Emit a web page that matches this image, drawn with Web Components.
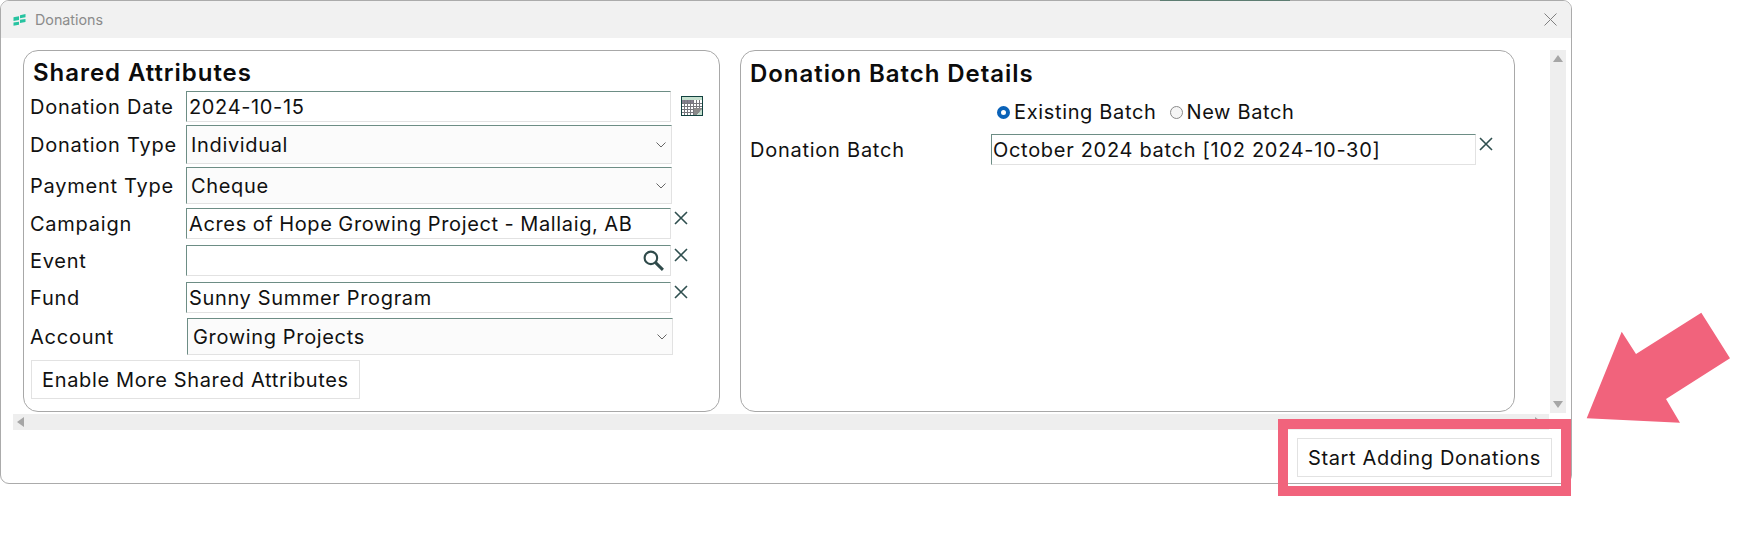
<!DOCTYPE html>
<html lang="en">
<head>
<meta charset="utf-8">
<title>Donations</title>
<style>
  html, body { margin: 0; background: #fff; }
  body { width: 1744px; height: 543px; position: relative; overflow: hidden; font-family: Inter, "Liberation Sans", sans-serif; color: #111; letter-spacing: .65px; }
  [slot="panels"] { flex: none; }
</style>
</head>
<body>
<donation-window>
  <form-panel slot="panels" heading="Shared Attributes" style="width:697px">
    <field-row label="Donation Date" top="0" height="31" icon="calendar" value="2024-10-15"></field-row>
    <field-row label="Donation Type" top="3" height="39" kind="select" value="Individual"></field-row>
    <field-row label="Payment Type" top="3" height="37" kind="select" value="Cheque"></field-row>
    <field-row label="Campaign" top="4" height="31" icon="clear" value="Acres of Hope Growing Project - Mallaig, AB" style="--ws:-.47px"></field-row>
    <field-row label="Event" top="6" height="31" icon="clear" search value=""></field-row>
    <field-row label="Fund" top="6" height="31" icon="clear" value="Sunny Summer Program"></field-row>
    <field-row label="Account" top="5" height="37" kind="select" shift="1" value="Growing Projects"></field-row>
    <plain-button style="margin:5px 0 0 7px">Enable More Shared Attributes</plain-button>
  </form-panel>
  <form-panel slot="panels" heading="Donation Batch Details" heading-drop="1" style="width:775px">
    <batch-choice></batch-choice>
    <field-row label="Donation Batch" top="0" height="31" label-width="241" pad="9" width="485" icon="clear" value="October 2024 batch [102 2024-10-30]" style="--ls:.7px;--inset:1px"></field-row>
  </form-panel>
  <plain-button slot="footer">Start Adding Donations</plain-button>
</donation-window>
<callout-mark></callout-mark>

<script>
const ICONS = {
  clear: `<svg width="14" height="14" viewBox="0 0 14 14"><path d="M1 1l12 12M13 1L1 13" stroke="#2f4f4f" stroke-width="1.600" fill="none"/></svg>`,
  search: `<svg width="23" height="23" viewBox="0 0 22 22"><circle cx="8.500" cy="8.500" r="6" stroke="#2f4a4a" stroke-width="2" fill="none"/><path d="M13 13l7 7" stroke="#2f4a4a" stroke-width="2.800" fill="none"/></svg>`,
  calendar: `<svg width="22" height="20" viewBox="0 0 22 20" shape-rendering="crispEdges">
    <rect x="0.5" y="0.5" width="21" height="19" fill="#fff" stroke="#12413f"/>
    <rect x="1" y="1" width="20" height="3" fill="#c5e0cf"/>
    <rect x="1" y="4" width="11" height="3" fill="#85808f"/>
    <path d="M1 7.500h20M1 10.500h20M1 13.500h20M1 16.500h20M3.500 4v15M6.500 4v15M9.500 4v15M12.500 4v15M15.500 4v15M18.500 4v15" stroke="#77777d" stroke-width="1" fill="none"/>
    <path d="M13 19V12h8v1l-5 6z" fill="#8a8a8a" shape-rendering="auto"/>
    <path d="M16 19l5-6v6z" fill="#c5e0cf" shape-rendering="auto"/>
  </svg>`
};

class PlainButton extends HTMLElement {
  connectedCallback() {
    if (this.shadowRoot) return;
    this.attachShadow({ mode: 'open' });
    this.shadowRoot.innerHTML = `
      <style>
        :host { display: block; width: fit-content; }
        button {
          display: block;
          height: 39px;
          padding: 0 10px;
          background: #fff;
          border: 1px solid #e2e2e2;
          font: 400 20px Inter, "Liberation Sans", sans-serif;
          letter-spacing: inherit;
          color: #111;
          white-space: nowrap;
        }
      </style>
      <button type="button"><slot></slot></button>
    `;
  }
}

class FieldRow extends HTMLElement {
  connectedCallback() {
    if (this.shadowRoot) return;
    const attr = (n, d) => this.hasAttribute(n) ? this.getAttribute(n) : d;
    const kind = attr('kind', 'text');
    const icon = attr('icon', '');
    const shift = Number(attr('shift', 0));
    const isSelect = kind === 'select';
    this.attachShadow({ mode: 'open' });
    this.shadowRoot.innerHTML = `
      <style>
        :host {
          display: flex;
          align-items: stretch;
          height: ${attr('height', 31)}px;
          margin-top: ${attr('top', 0)}px;
          padding-left: ${attr('pad', 6)}px;
        }
        .label {
          flex: none;
          width: ${Number(attr('label-width', 156)) + shift}px;
          display: flex;
          align-items: center;
          font-size: 20px;
          letter-spacing: .75px;
          white-space: nowrap;
        }
        .box {
          flex: none;
          box-sizing: border-box;
          width: ${Number(attr('width', isSelect ? 486 : 485))}px;
          display: flex;
          align-items: center;
          justify-content: space-between;
          border-style: solid;
          border-width: 1px;
          border-color: #6d8d85 #e2e2e2 #e2e2e2 #6d8d85;
          background: ${isSelect ? '#fbfbfb' : '#fff'};
          padding: 0 ${isSelect ? 5 : 5}px 0 ${isSelect ? 4 + shift : 2}px;
          font-size: 20px;
          letter-spacing: var(--ls, .65px);
          word-spacing: var(--ws, 0);
          white-space: nowrap;
        }
        .box span:first-child { margin-left: calc(var(--inset, 0px) * -1); }
        .chev { display: block; }
        .after { flex: none; margin-left: ${icon === 'calendar' ? 10 : 3}px; padding-top: ${icon === 'calendar' ? 5 : 3}px; line-height: 0; }
        .lens { line-height: 0; }
      </style>
      <span class="label">${attr('label', '')}</span>
      <div class="box">
        <span>${attr('value', '')}</span>
        ${isSelect ? `<svg class="chev" width="10" height="6" viewBox="0 0 10 6"><path d="M.5.500L5 5 9.500.500" stroke="#666" fill="none"/></svg>` : ''}
        ${this.hasAttribute('search') ? `<span class="lens">${ICONS.search}</span>` : ''}
      </div>
      ${icon ? `<span class="after">${ICONS[icon]}</span>` : ''}
    `;
  }
}

class BatchChoice extends HTMLElement {
  connectedCallback() {
    if (this.shadowRoot) return;
    this.attachShadow({ mode: 'open' });
    this.shadowRoot.innerHTML = `
      <style>
        :host {
          display: flex;
          align-items: center;
          box-sizing: border-box;
          height: 43px;
          padding: 0 0 1px 256px;
          font-size: 20px;
          white-space: nowrap;
        }
        i { flex: none; box-sizing: border-box; width: 13px; height: 13px; border-radius: 50%; margin-right: 4px; }
        .on { border: 4px solid #0a62b8; background: #fff; }
        .off { border: 1px solid #8a8a8a; background: #f5f5f5; margin: 0 3px 0 14px; }
      </style>
      <i class="on"></i><span>Existing Batch</span>
      <i class="off"></i><span>New Batch</span>
    `;
  }
}

class FormPanel extends HTMLElement {
  connectedCallback() {
    if (this.shadowRoot) return;
    const drop = Number(this.getAttribute('heading-drop') || 0);
    this.attachShadow({ mode: 'open' });
    this.shadowRoot.innerHTML = `
      <style>
        :host {
          display: block;
          box-sizing: border-box;
          height: 362px;
          border: 1px solid #a8a8a8;
          border-radius: 15px;
          background: #fff;
        }
        h2 {
          margin: 0;
          height: 40px;
          padding: ${5 + drop}px 0 0 9px;
          box-sizing: border-box;
          font-size: 24px;
          font-weight: 600;
          letter-spacing: .95px;
          line-height: 34px;
          color: #0c0c0c;
        }
      </style>
      <h2>${this.getAttribute('heading')}</h2>
      <slot></slot>
    `;
  }
}

class DonationWindow extends HTMLElement {
  connectedCallback() {
    if (this.shadowRoot) return;
    this.attachShadow({ mode: 'open' });
    this.shadowRoot.innerHTML = `
      <style>
        :host {
          display: flex;
          flex-direction: column;
          box-sizing: border-box;
          width: 1572px;
          height: 484px;
          border: 1px solid #ababab;
          border-radius: 9px;
          background: #fff;
          overflow: hidden;
        }
        .bar {
          flex: none;
          height: 37px;
          display: flex;
          align-items: center;
          background: #f1f1f1;
          padding: 0 14px 0 12px;
          font-size: 14.300px;
          letter-spacing: 0;
          color: #8b8b8b;
        }
        .bar svg.logo { margin-right: 9px; }
        .bar .close { margin-left: auto; line-height: 0; }
        .work {
          flex: none;
          display: grid;
          grid-template-columns: 1536px 16px;
          grid-template-rows: 364px 16px;
          margin: 12px 0 0 12px;
        }
        .panels { display: flex; gap: 20px; padding-left: 10px; overflow: hidden; }
        .vbar {
          background: #eeeeee;
          display: flex;
          flex-direction: column;
          justify-content: space-between;
          align-items: center;
          padding: 5px 0;
          margin-left: 1px;
          width: 16px;
          box-sizing: border-box;
          height: 363px;
        }
        .hbar {
          background: #eeeeee;
          display: flex;
          align-items: center;
          justify-content: space-between;
          padding: 0 7px 0 4px;
        }
        .foot {
          flex: none;
          display: flex;
          justify-content: flex-end;
          margin-top: 8px;
          padding-right: 19px;
        }
      </style>
      <div class="bar">
        <svg class="logo" width="13" height="12" viewBox="0 0 13 12"><path d="M7 1.200L12.500 0V3.300L7 4.300zM.5 3.200L6 2.300V6L.5 7zM7 5.800L12.500 5V8L7 9zM.5 8.500L6 7.800V10.800L.5 11.800z" fill="#27c3a0"/></svg>
        <span>Donations</span>
        <span class="close"><svg width="13" height="13" viewBox="0 0 13 13"><path d="M.5.500l12 12M12.500.500l-12 12" stroke="#808080" fill="none"/></svg></span>
      </div>
      <div class="work">
        <div class="panels"><slot name="panels"></slot></div>
        <div class="vbar">
          <svg width="10" height="7" viewBox="0 0 10 7"><path d="M5 0l5 7H0z" fill="#a6a6a6"/></svg>
          <svg width="10" height="7" viewBox="0 0 10 7"><path d="M5 7L0 0h10z" fill="#a6a6a6"/></svg>
        </div>
        <div class="hbar">
          <svg width="7" height="10" viewBox="0 0 7 10"><path d="M0 5l7-5v10z" fill="#a6a6a6"/></svg>
          <svg width="7" height="10" viewBox="0 0 7 10"><path d="M7 5L0 0v10z" fill="#a6a6a6"/></svg>
        </div>
      </div>
      <div class="foot"><slot name="footer"></slot></div>
    `;
  }
}

class CalloutMark extends HTMLElement {
  connectedCallback() {
    if (this.shadowRoot) return;
    this.attachShadow({ mode: 'open' });
    this.shadowRoot.innerHTML = `
      <style>
        :host { display: contents; }
        .frame {
          position: absolute;
          left: 1278px;
          top: 419px;
          width: 293px;
          height: 77px;
          box-sizing: border-box;
          border: 10px solid #f1637c;
        }
        .edge { position: absolute; left: 1160px; top: 0; width: 130px; height: 1px; background: #5d7d72; }
        svg { position: absolute; left: 0; top: 0; pointer-events: none; }
      </style>
      <div class="edge"></div>
      <div class="frame"></div>
      <svg width="1744" height="543" viewBox="0 0 1744 543">
        <path d="M1701.300 312.700L1730 358.300 1666 399 1680 422.700 1586.700 418.300 1621.700 331.700 1636 354z" fill="#f1637c"/>
      </svg>
    `;
  }
}

customElements.define('plain-button', PlainButton);
customElements.define('field-row', FieldRow);
customElements.define('batch-choice', BatchChoice);
customElements.define('form-panel', FormPanel);
customElements.define('donation-window', DonationWindow);
customElements.define('callout-mark', CalloutMark);
</script>
</body>
</html>
